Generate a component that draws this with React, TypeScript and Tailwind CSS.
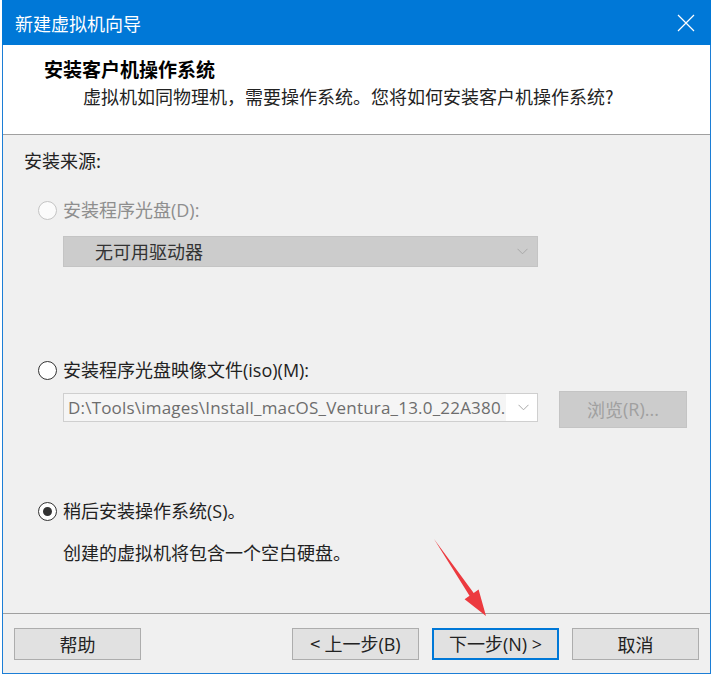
import React from "react";

const cjk = "font-['Noto_Sans_CJK_SC','Noto_Sans',sans-serif]";
const latin = "font-['Open_Sans','Noto_Sans_CJK_SC',sans-serif]";

// --- Radio button (win10 look) ---
const Radio = ({ checked, disabled }: { checked?: boolean; disabled?: boolean }) => (
  <span
    className={
      "w-[19px] h-[19px] rounded-full border flex items-center justify-center shrink-0 " +
      (disabled ? "border-[#c4c4c4] bg-[#fbfbfb]" : "border-[#333333] bg-white")
    }
  >
    {checked && <span className="w-[9px] h-[9px] rounded-full bg-[#333333]" />}
  </span>
);

const Chevron = ({ color }: { color: string }) => (
  <svg width="11" height="7" viewBox="0 0 11 7" fill="none">
    <path d="M0.5 0.8 L5.5 5.8 L10.5 0.8" stroke={color} strokeWidth="1" />
  </svg>
);

const Button = ({ label, primary }: { label: React.ReactNode; primary?: boolean }) => (
  <div
    className={
      "w-[127px] h-[32px] flex items-center justify-center bg-[#e1e1e1] text-[18px] text-[#222] " +
      (primary ? "border-2 border-[#0078d7]" : "border border-[#adadad]")
    }
  >
    {label}
  </div>
);

const Arrow = () => (
  <svg
    className="absolute left-0 top-0 pointer-events-none"
    width="714"
    height="678"
    viewBox="0 0 714 678"
  >
    <polygon
      points="434,539 473.7,593 478.6,589.6 486,616 464.6,599.2 469.5,595.8"
      fill="#ec3a3f"
    />
  </svg>
);

export default function App() {
  return (
    <div className={"relative w-[714px] h-[678px] bg-white overflow-hidden " + cjk}>
      <div className="ml-[2px] w-[709px] h-[674px] flex flex-col border-x border-b border-[#1c7ed6]">
        {/* title bar */}
        <div className="h-[45px] -mx-px bg-[#0078d7] flex items-center justify-between pl-[13px] pr-[16px] shrink-0">
          <span className="text-white text-[18px] leading-none">新建虚拟机向导</span>
          <svg width="18" height="18" viewBox="0 0 18 18">
            <path d="M1 1 L17 17 M17 1 L1 17" stroke="white" strokeWidth="1.2" />
          </svg>
        </div>

        {/* header */}
        <div className="h-[90px] bg-white border-b border-[#a0a0a0] shrink-0 flex flex-col">
          <div className="mt-[12px] ml-[41px] text-[19px] font-bold text-black leading-[24px]">
            安装客户机操作系统
          </div>
          <div className="mt-[4px] ml-[80px] text-[18px] text-[#222] leading-[22px]">
            虚拟机如同物理机，需要操作系统。您将如何安装客户机操作系统?
          </div>
        </div>

        {/* body */}
        <div className="flex-1 bg-[#f0f0f0] flex flex-col text-[18px]">
          <div className="mt-[15px] ml-[21px] leading-[20px] text-[#222]">安装来源:</div>

          <div className="mt-[30px] ml-[35px] h-[20px] flex items-center gap-[6px] text-[#8e8e8e]">
            <Radio disabled />
            <span>
              安装程序光盘<span className={latin}>(D):</span>
            </span>
          </div>

          <div className="mt-[16px] ml-[60px] w-[475px] h-[31px] bg-[#cccccc] border border-[#c4c4c4] flex items-center justify-between pl-[31px] pr-[9px]">
            <span className="text-[#333]">无可用驱动器</span>
            <Chevron color="#a8a8a8" />
          </div>

          <div className="mt-[93px] ml-[35px] h-[20px] flex items-center gap-[6px] text-[#222]">
            <Radio />
            <span>
              安装程序光盘映像文件<span className={latin}>(iso)(M):</span>
            </span>
          </div>

          <div className="mt-[11px] ml-[60px] flex items-start gap-[21px]">
            <div className="mt-[2px] w-[475px] h-[29px] bg-white border border-[#cfcfcf] flex items-center justify-between pr-[8px]">
              <span className={"h-full pl-[4px] flex items-center bg-[#f5f5f5] text-[17px] text-[#6d6d6d] tracking-[0.2px] " + latin}>
                D:\Tools\images\Install_macOS_Ventura_13.0_22A380.
              </span>
              <Chevron color="#a8a8a8" />
            </div>
            <div className="w-[128px] h-[37px] bg-[#cccccc] border border-[#c4c4c4] flex items-center justify-center text-[#a0a0a0]">
              浏览<span className={latin}>(R)...</span>
            </div>
          </div>

          <div className="mt-[73px] ml-[35px] h-[20px] flex items-center gap-[6px] text-[#222]">
            <Radio checked />
            <span>
              稍后安装操作系统<span className={latin}>(S)</span>。
            </span>
          </div>

          <div className="mt-[21px] ml-[60px] leading-[20px] text-[#222]">
            创建的虚拟机将包含一个空白硬盘。
          </div>
        </div>

        {/* footer */}
        <div className="h-[60px] bg-[#f0f0f0] border-t border-[#a0a0a0] shrink-0 flex items-start pt-[14px] pl-[11px]">
          <Button label="帮助" />
          <div className="ml-[151px] flex gap-[13px]">
            <Button label={<span>&lt; 上一步<span className={latin}>(B)</span></span>} />
            <Button primary label={<span>下一步<span className={latin}>(N) &gt;</span></span>} />
            <Button label="取消" />
          </div>
        </div>
      </div>
      <Arrow />
    </div>
  );
}
